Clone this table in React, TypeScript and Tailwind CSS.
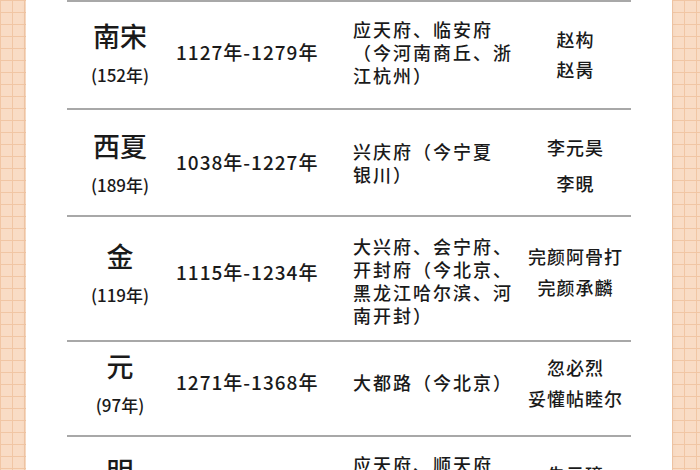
import React from "react";

type Dynasty = {
  name: string;
  span: string;
  dates: string;
  capital: string[];
  emperors: string[];
  row: string;
  capCls?: string;
  empCls?: string;
};

const dynasties: Dynasty[] = [
  {
    name: "南宋",
    span: "(152年)",
    dates: "1127年-1279年",
    capital: ["应天府、临安府", "（今河南商丘、浙", "江杭州）"],
    emperors: ["赵构", "赵昺"],
    row: "h-[108px] pb-[6px]",
    empCls: "leading-[30px] mt-[4px]",
  },
  {
    name: "西夏",
    span: "(189年)",
    dates: "1038年-1227年",
    capital: ["兴庆府（今宁夏", "银川）"],
    emperors: ["李元昊", "李晛"],
    row: "h-[107px]",
    empCls: "leading-[36px] mt-[5px]",
  },
  {
    name: "金",
    span: "(119年)",
    dates: "1115年-1234年",
    capital: ["大兴府、会宁府、", "开封府（今北京、", "黑龙江哈尔滨、河", "南开封）"],
    emperors: ["完颜阿骨打", "完颜承麟"],
    row: "h-[125px] pb-[13px]",
    capCls: "mt-[18px]",
    empCls: "leading-[31px]",
  },
  {
    name: "元",
    span: "(97年)",
    dates: "1271年-1368年",
    capital: ["大都路（今北京）"],
    emperors: ["忽必烈", "妥懽帖睦尔"],
    row: "h-[95px] pb-[12px]",
    empCls: "leading-[31px]",
  },
  {
    name: "明",
    span: "(276年)",
    dates: "1368年-1644年",
    capital: ["应天府、顺天府", "（今江苏南京、", "北京）"],
    emperors: ["朱元璋", "朱由检"],
    row: "h-[108px] pb-[6px]",
    empCls: "leading-[30px] mt-[4px]",
  },
];

function Row({ d }: { d: Dynasty }) {
  return (
    <div className={`flex items-center border-t-2 border-[#a8a8a8] ${d.row}`}>
      <div className="w-[106px] flex flex-col items-center">
        <div className="text-[27px] leading-[34px]">{d.name}</div>
        <div className="text-[17px] leading-[22px] mt-[11px]">{d.span}</div>
      </div>
      <div className="w-[180px] pl-[3px] text-[19px] tracking-[1px] whitespace-nowrap">
        {d.dates}
      </div>
      <div
        className={`w-[167px] text-[18px] leading-[23px] tracking-[2px] whitespace-nowrap ${d.capCls ?? ""}`}
      >
        {d.capital.map((line) => (
          <div key={line}>{line}</div>
        ))}
      </div>
      <div
        className={`flex-1 flex flex-col items-center text-[18px] tracking-[1px] whitespace-nowrap ${d.empCls ?? ""}`}
      >
        {d.emperors.map((e) => (
          <div key={e}>{e}</div>
        ))}
      </div>
    </div>
  );
}

export default function App() {
  return (
    <div
      className="w-[700px] h-[470px] overflow-hidden flex pl-[26px] pr-[28px] bg-[#f9dcc5] bg-[linear-gradient(#f1c6a4_1px,transparent_1px),linear-gradient(90deg,#f1c6a4_1px,transparent_1px)] bg-[size:12px_12px]"
      style={{ fontFamily: '"Noto Sans CJK SC", "Noto Sans", sans-serif' }}
    >
      <div className="flex-1 bg-white px-[41px] font-medium text-[#1a1a1a] shadow-[0_0_6px_rgba(0,0,0,0.04)]">
        {dynasties.map((d) => (
          <Row key={d.name} d={d} />
        ))}
      </div>
    </div>
  );
}
